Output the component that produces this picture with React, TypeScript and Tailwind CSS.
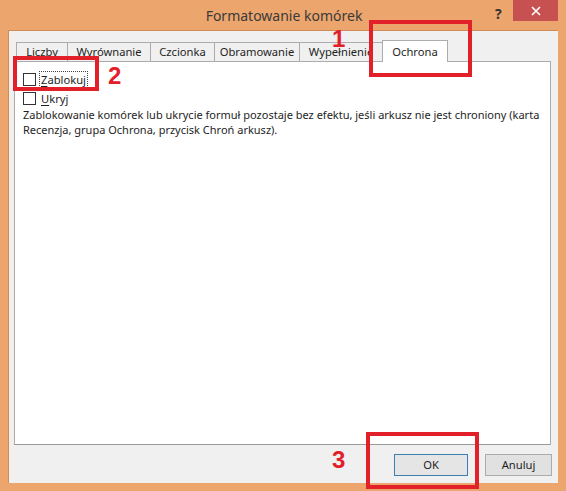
const font = { fontFamily: '"Noto Sans", "Open Sans", sans-serif' };
const digitFont = { fontFamily: '"Liberation Sans", Arial, sans-serif' };

const tabs = [
  { label: "Liczby", w: "w-[52px]" },
  { label: "Wyrównanie", w: "w-[84px]" },
  { label: "Czcionka", w: "w-[65px]" },
  { label: "Obramowanie", w: "w-[86px]" },
  { label: "Wypełnienie", w: "w-[84px]" },
];

function Checkbox({ label, focused }: { label: string; focused?: boolean }) {
  const first = label.slice(0, 1);
  const rest = label.slice(1);
  return (
    <label className="flex items-center gap-[4px] h-[18px]">
      <span className="w-[13px] h-[13px] border border-[#333] bg-white shrink-0" />
      <span
        className={`px-[1px] leading-[15px] ${
          focused ? "outline outline-1 outline-dotted outline-[#444]" : ""
        }`}
      >
        <span className="underline underline-offset-2">{first}</span>
        {rest}
      </span>
    </label>
  );
}

export default function App() {
  return (
    <div
      className="relative w-[566px] h-[491px] bg-[#eca56d] flex flex-col text-[11.2px] text-[#1e1e1e] overflow-hidden"
      style={font}
    >
      {/* title bar */}
      <div className="relative h-[30px] shrink-0 flex items-center justify-center">
        <span className="text-[14px] text-[#3a3a3a] pl-[2px]">Formatowanie komórek</span>
        <span className="absolute left-[495px] top-[3px] text-[14px] font-bold text-[#333]">?</span>
        <div className="absolute left-[513px] top-0 w-[45px] h-[21px] bg-[#c75050] flex items-center justify-center">
          <svg width="10" height="10" viewBox="0 0 10 10">
            <path d="M1 1 L9 9 M9 1 L1 9" stroke="white" strokeWidth="1.6" />
          </svg>
        </div>
      </div>

      {/* dialog body */}
      <div className="flex-1 mx-[8px] mb-[8px] bg-[#f0f0f0] border-t border-l border-[#d08c58] flex flex-col">
        <div className="flex items-end pl-[7px] pt-[7px] h-[30px]">
          {tabs.map((t) => (
            <div
              key={t.label}
              className={`${t.w} h-[19px] -ml-px first:ml-0 border border-b-0 border-[#acacac] bg-[#f0f0f0] flex items-center justify-center whitespace-nowrap`}
            >
              {t.label}
            </div>
          ))}
          <div className="relative z-10 w-[66px] h-[22px] -ml-px -mb-px border border-b-0 border-[#acacac] bg-white flex items-start justify-center pt-[3px]">
            Ochrona
          </div>
        </div>

        <div className="ml-[5px] w-[537px] h-[384px] bg-white border border-[#acacac] border-b-[#999] pt-[8px] pl-[8px]">
          <Checkbox label="Zablokuj" focused />
          <div className="mt-[1px]">
            <Checkbox label="Ukryj" />
          </div>
          <p className="text-[11px] leading-[15px] whitespace-nowrap">
            Zablokowanie komórek lub ukrycie formuł pozostaje bez efektu, jeśli arkusz nie jest chroniony (karta
            <br />
            Recenzja, grupa Ochrona, przycisk Chroń arkusz).
          </p>
        </div>

        <div className="flex justify-end gap-[17px] mt-[9px] pr-[6px]">
          <button className="w-[74px] h-[22px] border border-[#3c7fb1] bg-[#e5e5e5]">OK</button>
          <button className="w-[67px] h-[22px] border border-[#acacac] bg-[#e1e1e1]">Anuluj</button>
        </div>
      </div>

      {/* red callouts drawn on top */}
      <div className="absolute left-[369px] top-[20px] w-[103px] h-[57px] border-[4px] border-[#e2202a]" />
      <span className="absolute left-[332px] top-[27px] text-[24px] font-bold text-[#e2202a] leading-none" style={digitFont}>
        1
      </span>
      <div className="absolute left-[13px] top-[56px] w-[86px] h-[35px] border-[4px] border-[#e2202a]" />
      <span className="absolute left-[108px] top-[64px] text-[24px] font-bold text-[#e2202a] leading-none" style={digitFont}>
        2
      </span>
      <div className="absolute left-[366px] top-[432px] w-[113px] h-[57px] border-[4px] border-[#e2202a]" />
      <span className="absolute left-[332px] top-[448px] text-[24px] font-bold text-[#e2202a] leading-none" style={digitFont}>
        3
      </span>
    </div>
  );
}
